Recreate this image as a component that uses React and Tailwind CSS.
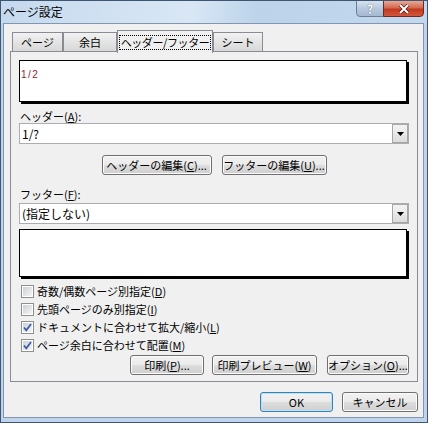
import React from 'react'

const U = ({ children }) => <span className="underline underline-offset-[1px]">{children}</span>

function Btn({ w, def, children }) {
  return (
    <div
      className={`h-[20px] ${w} shrink-0 whitespace-nowrap rounded-[3px] border flex items-center justify-center leading-[14px] bg-[linear-gradient(#f2f2f2_0%,#ebebeb_48%,#dddddd_52%,#cfcfcf_100%)] ${
        def
          ? 'border-[#3c7fb1] shadow-[inset_0_0_0_1px_#b4e4f8]'
          : 'border-[#707070] shadow-[inset_0_0_0_1px_#fbfbfb]'
      }`}
    >
      {children}
    </div>
  )
}

function Combo({ value }) {
  return (
    <div className="h-[21px] w-full bg-white border border-[#abadb3] flex items-center">
      <span className="flex-1 pl-[2px] leading-[14px] text-[12px]">{value}</span>
      <div className="h-[19px] w-[16px] border border-[#a7a7a7] bg-[linear-gradient(#f4f4f4,#dcdcdc)] flex items-center justify-center">
        <svg width="7" height="4" viewBox="0 0 7 4">
          <path d="M0 0h7L3.5 4z" fill="#000" />
        </svg>
      </div>
    </div>
  )
}

function Check({ checked, children }) {
  return (
    <div className="h-[18px] flex items-center">
      <div className="ml-[2px] w-[13px] h-[13px] border border-[#8e8f8f] bg-white p-[1px] flex">
        <div className="flex-1 bg-[linear-gradient(135deg,#cdd1d6,#f5f5f5)] flex items-center justify-center">
          {checked && (
            <svg width="9" height="9" viewBox="0 0 9 9">
              <path d="M1 4.5l2.3 2.8L8 1" stroke="#3a5aa8" strokeWidth="1.7" fill="none" />
            </svg>
          )}
        </div>
      </div>
      <span className="ml-[3px] leading-[14px] whitespace-nowrap">{children}</span>
    </div>
  )
}

function Tab({ w, children }) {
  return (
    <div className={`${w} h-[19px] border border-b-0 border-[#898c95] bg-[linear-gradient(#f2f2f2,#e4e4e4_50%,#d8d8d8)] flex items-center justify-center leading-[14px] whitespace-nowrap`}>
      {children}
    </div>
  )
}

export default function App() {
  return (
    <div className="w-[428px] h-[423px] overflow-hidden bg-[#bfd4eb] border border-[#3f5671] flex flex-col text-[11px] text-black [font-family:'Noto_Sans_CJK_JP','Liberation_Sans',sans-serif]">
      {/* title bar */}
      <div className="h-[22px] shrink-0 flex items-start bg-[linear-gradient(100deg,#c5d9ee_0%,#d9e7f5_45%,#bcd3ea_60%,#c3d8ee_100%)]">
        <span className="ml-[2px] mt-[4px] text-[12px] leading-[14px]">ページ設定</span>
        <div className="ml-auto mr-[3px] -mt-[1px] flex">
          <div className="w-[28px] h-[17px] rounded-bl-[4px] border border-[#6d7f97] bg-[linear-gradient(#d6e2f0,#b8c9de_50%,#a5b9d3)] flex items-center justify-center text-white font-bold text-[12px] leading-[12px] [text-shadow:0_0_1px_#334]">
            ?
          </div>
          <div className="w-[41px] h-[17px] -ml-[1px] rounded-br-[4px] border border-[#6e2a22] bg-[linear-gradient(#e9a896,#d36a51_45%,#c0391f_55%,#d5553a)] flex items-center justify-center">
            <svg width="12" height="10" viewBox="0 0 12 10">
              <path d="M2 1l8 8M10 1l-8 8" stroke="#3a1410" strokeWidth="3.2" />
              <path d="M2 1l8 8M10 1l-8 8" stroke="#fff" strokeWidth="2" />
            </svg>
          </div>
        </div>
      </div>

      {/* client */}
      <div className="ml-[2px] mr-[3px] h-[395px] shrink-0 bg-[#f0f0f0] border border-[#8396b0] flex flex-col">
        {/* tabs */}
        <div className="mt-[6px] h-[21px] pl-[8px] flex items-end relative z-10">
          <Tab w="w-[51px]">ページ</Tab>
          <Tab w="w-[54px]">余白</Tab>
          <div className="w-[96px] h-[23px] -mb-[2px] border border-b-0 border-[#898c95] bg-[#f0f0f0] flex items-center justify-center whitespace-nowrap">
            <span className="outline outline-1 outline-dotted outline-[#000] px-[1px] leading-[13px] tracking-[-0.4px]">ヘッダー/フッター</span>
          </div>
          <Tab w="w-[50px]">シート</Tab>
        </div>

        {/* panel */}
        <div className="ml-[6px] w-[408px] h-[331px] border border-[#898c95] px-[8px] pt-[8px] flex flex-col">
          <div className="h-[44px] w-[390px]">
            <div className="h-[42px] w-[388px] bg-white border border-black shadow-[2px_2px_0_#000] pt-[4px] pl-[1px]">
              <span className="text-[10px] leading-[12px] tracking-[1.5px] text-[#9a1a2b] [font-family:'Liberation_Sans',sans-serif]">1/2</span>
            </div>
          </div>
          <div className="mt-[5px] h-[14px] leading-[14px] pl-[1px]">
            ヘッダー(<U>A</U>):
          </div>
          <Combo value="1/?" />
          <div className="mt-[11px] flex justify-center gap-[10px]">
            <Btn w="w-[110px]">ヘッダーの編集(<U>C</U>)...</Btn>
            <Btn w="w-[105px]">フッターの編集(<U>U</U>)...</Btn>
          </div>
          <div className="mt-[12px] mb-[2px] h-[14px] leading-[14px] pl-[1px]">
            フッター(<U>F</U>):
          </div>
          <Combo value="(指定しない)" />
          <div className="mt-[5px] h-[50px] w-[390px]">
            <div className="h-[48px] w-[388px] bg-white border border-black shadow-[2px_2px_0_#000]" />
          </div>
          <div className="mt-[3px] flex flex-col">
            <Check>奇数/偶数ページ別指定(<U>D</U>)</Check>
            <Check>先頭ページのみ別指定(<U>I</U>)</Check>
            <Check checked>ドキュメントに合わせて拡大/縮小(<U>L</U>)</Check>
            <Check checked>ページ余白に合わせて配置(<U>M</U>)</Check>
          </div>
          <div className="mt-[1px] flex justify-end">
            <Btn w="w-[74px]">印刷(<U>P</U>)...</Btn>
            <div className="ml-[8px]">
              <Btn w="w-[105px]">印刷プレビュー(<U>W</U>)</Btn>
            </div>
            <div className="ml-[10px]">
              <Btn w="w-[82px]">オプション(<U>O</U>)...</Btn>
            </div>
          </div>
        </div>

        {/* bottom buttons */}
        <div className="mt-[10px] mr-[5px] flex justify-end gap-[9px]">
          <Btn w="w-[73px]" def>OK</Btn>
          <Btn w="w-[76px]">キャンセル</Btn>
        </div>
      </div>
    </div>
  )
}
